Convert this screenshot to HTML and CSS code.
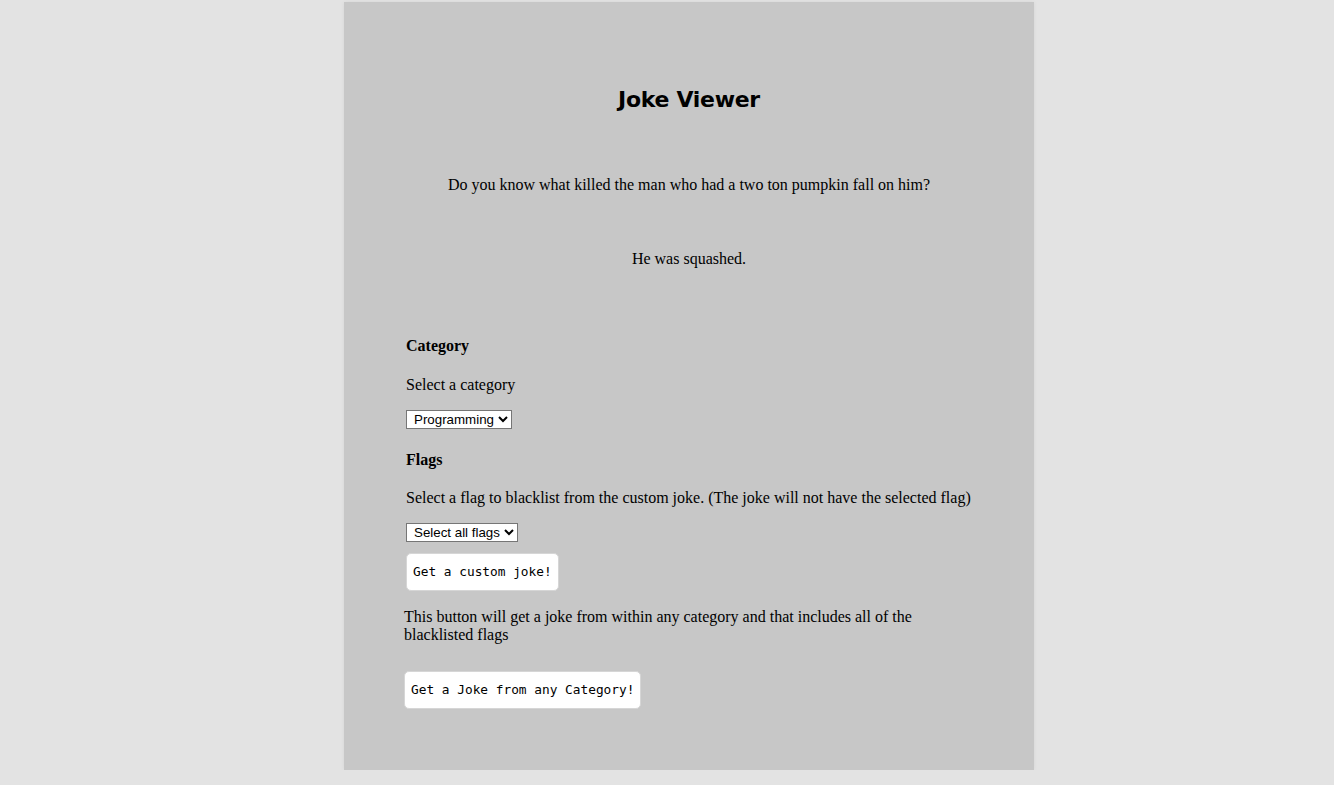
FILE: index.html
```html
<!DOCTYPE html>
<html lang="en">
<head>
<meta charset="utf-8">
<title>Joke Viewer</title>
<link rel="stylesheet" href="styles.css">
</head>
<body>
<main class="card">
  <h1 class="title">Joke Viewer</h1>
  <p class="setup">Do you know what killed the man who had a two ton pumpkin fall on him?</p>
  <p class="punchline">He was squashed.</p>
  <section class="options">
    <h4 class="heading heading-first">Category</h4>
    <p class="label">Select a category</p>
    <select class="picker">
      <option>Programming</option>
    </select>
    <h4 class="heading heading-flags">Flags</h4>
    <p class="label">Select a flag to blacklist from the custom joke. (The joke will not have the selected flag)</p>
    <select class="picker picker-flags">
      <option>Select all flags</option>
    </select>
    <button class="btn btn-custom">Get a custom joke!</button>
  </section>
  <section class="any">
    <p class="note">This button will get a joke from within any category and that includes all of the blacklisted flags</p>
    <button class="btn btn-any">Get a Joke from any Category!</button>
  </section>
</main>
</body>
</html>
```

FILE: styles.css
```css
html, body {
  margin: 0;
  padding: 0;
  background: #e3e3e3;
}
body {
  font-family: "Liberation Serif", "Times New Roman", serif;
  font-size: 16px;
  line-height: 18px;
  color: #000;
  padding-top: 2px;
}
.card {
  box-sizing: border-box;
  width: 690px;
  height: 768px;
  margin-left: 344px;
  background: #c7c7c7;
  padding: 84px 0 0 0;
  box-shadow: 0 0 4px rgba(0,0,0,0.06);
}
.title {
  margin: 0;
  text-align: center;
  font-family: "Comic Sans MS", "DejaVu Sans", sans-serif;
  font-weight: bold;
  font-size: 22px;
  line-height: 28px;
  letter-spacing: -0.3px;
}
.setup {
  margin: 62px 0 0;
  text-align: center;
}
.punchline {
  margin: 56px 0 0;
  text-align: center;
}
.options {
  padding-left: 62px;
  display: flex;
  flex-direction: column;
  align-items: flex-start;
}
.heading {
  margin: 0;
  font-size: 16px;
  font-weight: bold;
  line-height: 18px;
}
.heading-first { margin-top: 69px; }
.heading-flags { margin-top: 22px; }
.label {
  margin: 20px 0 0;
}
.options .label:first-of-type { margin-top: 21px; }
.picker {
  box-sizing: border-box;
  margin-top: 16px;
  height: 19px;
  font-family: "Liberation Sans", Arial, sans-serif;
  font-size: 13.33px;
  background: #fff;
  border: 1px solid #767676;
  border-radius: 0;
  padding: 0 1px 0 3px;
  color: #000;
}
.picker-flags { margin-top: 16px; }
.btn {
  box-sizing: border-box;
  height: 38px;
  min-height: 38px;
  background: #fff;
  border: 1px solid #d6d6d6;
  border-radius: 5px;
  padding: 0 6px;
  font-family: "DejaVu Sans Mono", "Liberation Mono", monospace;
  font-size: 12.8px;
  line-height: 16px;
  color: #000;
  cursor: pointer;
  flex-shrink: 0;
}
.btn-custom { margin-top: 11px; }
.any {
  padding-left: 60px;
  display: flex;
  flex-direction: column;
  align-items: flex-start;
}
.note {
  margin: 17px 0 0;
  width: 540px;
}
.btn-any { margin-top: 27px; }
```
